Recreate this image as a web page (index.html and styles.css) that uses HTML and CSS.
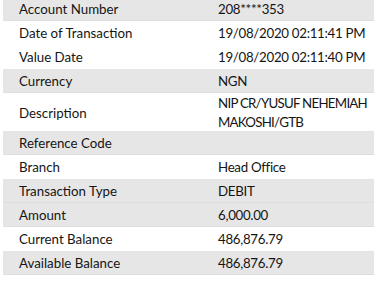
FILE: index.html
```html
<!DOCTYPE html>
<html>
<head>
<meta charset="utf-8">
<link rel="stylesheet" href="styles.css">
</head>
<body>
<div class="details">
  <div class="row shade"><div class="label">Account Number</div><div class="value">208****353</div></div>
  <div class="row"><div class="label">Date of Transaction</div><div class="value">19/08/2020 02:11:41 PM</div></div>
  <div class="row"><div class="label">Value Date</div><div class="value">19/08/2020 02:11:40 PM</div></div>
  <div class="row shade"><div class="label">Currency</div><div class="value">NGN</div></div>
  <div class="row tall"><div class="label">Description</div><div class="value caps">NIP CR/YUSUF NEHEMIAH<br>MAKOSHI/GTB</div></div>
  <div class="row shade"><div class="label">Reference Code</div><div class="value"></div></div>
  <div class="row"><div class="label">Branch</div><div class="value">Head Office</div></div>
  <div class="row shade"><div class="label">Transaction Type</div><div class="value">DEBIT</div></div>
  <div class="row shade"><div class="label">Amount</div><div class="value">6,000.00</div></div>
  <div class="row"><div class="label">Current Balance</div><div class="value">486,876.79</div></div>
  <div class="row shade"><div class="label">Available Balance</div><div class="value">486,876.79</div></div>
</div>
</body>
</html>
```

FILE: styles.css
```css
html, body {
  margin: 0;
  padding: 0;
  background: #ffffff;
}
body {
  font-family: Lato, "Open Sans", sans-serif;
  font-size: 13.3px;
  color: #151515;
}
.details {
  margin: -3px 0 0 3px;
  display: flex;
  flex-direction: column;
}
.row {
  display: grid;
  grid-template-columns: 215px 1fr;
  align-items: center;
  height: 24px;
  box-sizing: border-box;
}
.row.shade {
  background: #e6e6e6;
  border-bottom: 1px solid #dedede;
}
.row.tall {
  height: 38px;
}
.label {
  padding-left: 16px;
  line-height: 19px;
  padding-top: 1px;
  white-space: nowrap;
}
.value {
  line-height: 19px;
  padding-top: 1px;
  white-space: nowrap;
  letter-spacing: -0.3px;
}
.value.caps {
  letter-spacing: -0.75px;
}
```
